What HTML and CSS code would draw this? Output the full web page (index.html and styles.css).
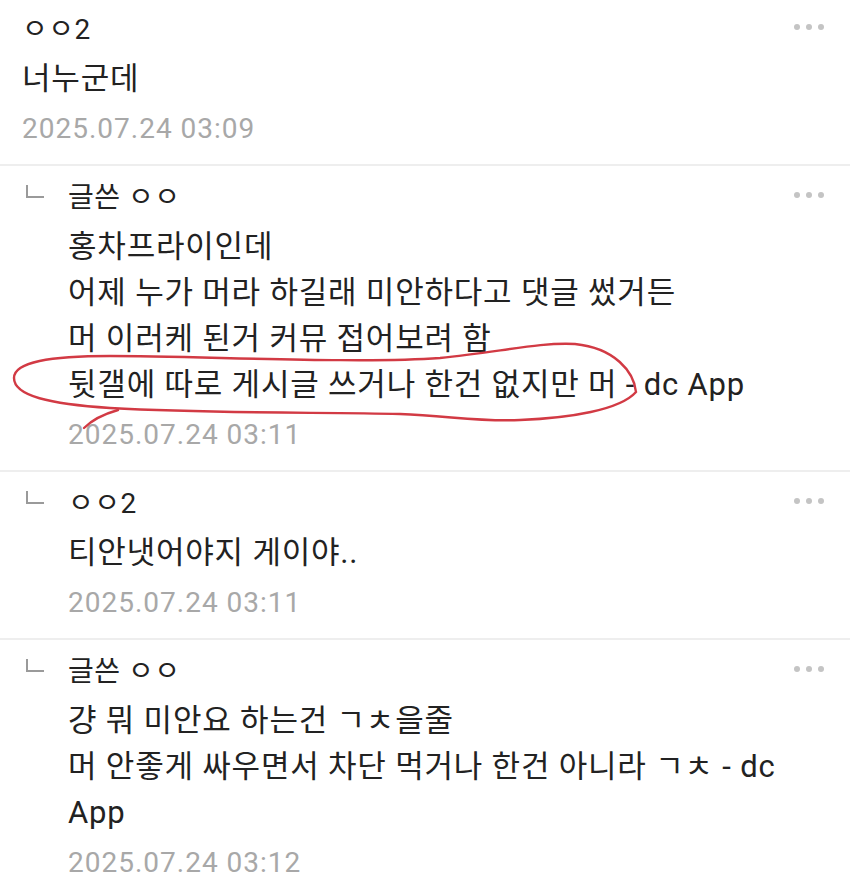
FILE: index.html
```html
<!DOCTYPE html>
<html lang="ko">
<head>
  <meta charset="utf-8">
  <title>댓글</title>
  <link rel="stylesheet" href="styles.css">
</head>
<body>
  <div class="comment-list">
    <div class="comment">
      <div class="comment-head">
        <span class="nick">ㅇㅇ2</span>
        <span class="more"><i></i><i></i><i></i></span>
      </div>
      <p class="text">너누군데</p>
      <div class="date">2025.07.24 03:09</div>
    </div>

    <div class="comment reply">
      <span class="reply-mark"></span>
      <div class="comment-head">
        <span class="nick">글쓴 ㅇㅇ</span>
        <span class="more"><i></i><i></i><i></i></span>
      </div>
      <p class="text">홍차프라이인데<br>어제 누가 머라 하길래 미안하다고 댓글 썼거든<br>머 이러케 된거 커뮤 접어보려 함<br>뒷갤에 따로 게시글 쓰거나 한건 없지만 머 - dc App</p>
      <div class="date">2025.07.24 03:11</div>
    </div>

    <div class="comment reply">
      <span class="reply-mark"></span>
      <div class="comment-head">
        <span class="nick">ㅇㅇ2</span>
        <span class="more"><i></i><i></i><i></i></span>
      </div>
      <p class="text">티안냇어야지 게이야..</p>
      <div class="date">2025.07.24 03:11</div>
    </div>

    <div class="comment reply">
      <span class="reply-mark"></span>
      <div class="comment-head">
        <span class="nick">글쓴 ㅇㅇ</span>
        <span class="more"><i></i><i></i><i></i></span>
      </div>
      <p class="text">걍 뭐 미안요 하는건 ㄱㅊ을줄<br>머 안좋게 싸우면서 차단 먹거나 한건 아니라 ㄱㅊ - dc App</p>
      <div class="date">2025.07.24 03:12</div>
    </div>
  </div>

  <!-- red pen mark over the 4th line of the second comment -->
  <svg class="scribble" width="850" height="892" viewBox="0 0 850 892">
    <path d="M636 392 C 634 372, 615 348, 575 344 C 540 342, 500 352, 440 358 C 360 364, 200 356, 110 356 C 50 356, 14 362, 14 378 C 14 396, 50 404, 110 408 C 220 414, 320 412, 400 414 C 450 416, 480 422, 520 420 C 570 418, 620 410, 636 392"
          fill="none" stroke="#d23a44" stroke-width="2.4" stroke-linecap="round"/>
    <path d="M118 410 C 104 414, 92 420, 84 428" fill="none" stroke="#d23a44" stroke-width="2.4" stroke-linecap="round"/>
  </svg>
</body>
</html>
```

FILE: styles.css
```css
body {
  margin: 0;
  background: #fff;
  font-family: Roboto, "Noto Sans CJK KR", sans-serif;
  color: #222;
  position: relative;
}

.comment-list {
  display: flex;
  flex-direction: column;
}

.comment {
  position: relative;
  padding: 9px 22px 12px 22px;
  border-bottom: 2px solid #eeeeee;
}

.comment:first-child {
  padding-top: 7px;
}

.comment.reply {
  padding-left: 68px;
  padding-right: 18px;
}

.comment-head {
  display: flex;
  justify-content: space-between;
  align-items: center;
  height: 40px;
}

.nick {
  font-size: 28px;
  letter-spacing: 0.5px;
  color: #222;
}

.more {
  display: flex;
  gap: 6px;
  padding-right: 4px;
}

.comment.reply .more {
  padding-right: 8px;
}

.more i {
  width: 6px;
  height: 6px;
  border-radius: 50%;
  background: #c4c4c4;
}

.text {
  margin: 9px 0 0 0;
  font-size: 31px;
  letter-spacing: 0.8px;
  line-height: 46px;
  color: #222;
}

.date {
  margin-top: 4px;
  font-size: 28px;
  letter-spacing: 1px;
  line-height: 46px;
  color: #a8a8a8;
}

.reply-mark {
  position: absolute;
  left: 26px;
  top: 19px;
  width: 16px;
  height: 11px;
  border-left: 2px solid #9a9a9a;
  border-bottom: 2px solid #9a9a9a;
}

.scribble {
  position: absolute;
  left: 0;
  top: 0;
  pointer-events: none;
}
```
